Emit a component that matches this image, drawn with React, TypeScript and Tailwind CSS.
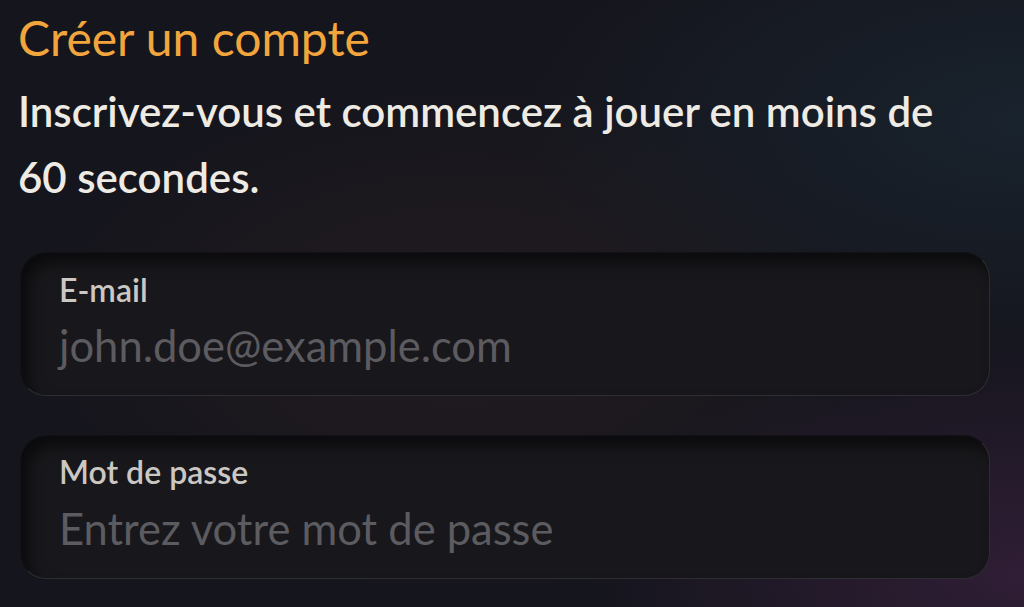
import React from "react";

export default function App() {
  return (
    <div
      className="w-[1024px] h-[607px] overflow-hidden bg-[#15151d] bg-[radial-gradient(ellipse_at_100%_20%,rgba(40,90,110,0.2),transparent_35%),radial-gradient(ellipse_at_100%_95%,rgba(110,50,110,0.3),transparent_30%),radial-gradient(ellipse_at_45%_55%,rgba(60,40,35,0.35),transparent_55%)] px-[18px] pt-[12px]"
      style={{ fontFamily: "Lato, 'Noto Sans', sans-serif" }}
    >
      <h1 className="text-[48px] leading-[52px] font-normal text-[#f2a53c]">Créer un compte</h1>
      <p className="mt-[14px] text-[42px] leading-[66px] font-semibold text-[#eeebe4] w-[960px]">
        Inscrivez-vous et commencez à jouer en moins de 60 secondes.
      </p>
      <div className="mt-[42px] flex flex-col gap-[39px] pl-[2px] w-[972px]">
        <div className="h-[144px] rounded-[26px] bg-[#18171b] border border-[#2e2d32] border-t-[#121116] border-l-[#121116] shadow-[inset_8px_10px_14px_rgba(0,0,0,0.55)] pl-[38px] pt-[19px]">
          <div className="text-[32px] leading-[36px] font-semibold text-[#cbc7c2]">E-mail</div>
          <div className="mt-[14px] text-[43.5px] leading-[46px] text-[#5c5b60]">john.doe@example.com</div>
        </div>
        <div className="h-[144px] rounded-[26px] bg-[#18171b] border border-[#2e2d32] border-t-[#121116] border-l-[#121116] shadow-[inset_8px_10px_14px_rgba(0,0,0,0.55)] pl-[38px] pt-[18px]">
          <div className="text-[32px] leading-[36px] font-semibold text-[#cbc7c2]">Mot de passe</div>
          <div className="mt-[15px] text-[43.5px] leading-[46px] text-[#5c5b60]">Entrez votre mot de passe</div>
        </div>
      </div>
    </div>
  );
}
